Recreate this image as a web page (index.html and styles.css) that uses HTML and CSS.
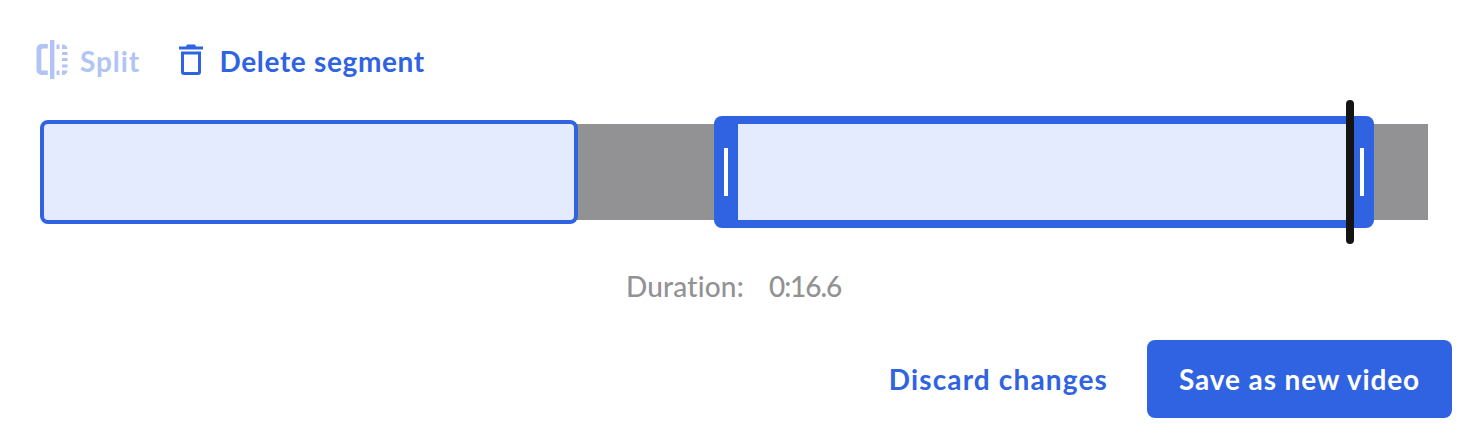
FILE: index.html
```html
<!DOCTYPE html>
<html lang="en">
<head>
    <meta charset="UTF-8">
    <meta name="viewport" content="width=device-width, initial-scale=1.0">
    <title>Video editor</title>
    <link rel="stylesheet" href="styles.css">
</head>
<body>
    <div class="editor">
        <div class="toolbar">
            <button class="tool split" disabled>
                <svg width="32" height="40" viewBox="0 0 32 40" fill="currentColor">
                    <path d="M11.800 4H5.500a5 5 0 0 0-5 5v21a5 5 0 0 0 5 5h6.300v-4.500H6.800a1.500 1.500 0 0 1-1.500-1.500V10a1.500 1.500 0 0 1 1.500-1.500h5z"/>
                    <rect x="14" y="0" width="4.400" height="39"/>
                    <path d="M20.500 4.500h3v4.500h-3zM20.500 30.500h3v4.500h-3zM26 4.500a5.500 5 0 0 1 5.500 4.500h-5.500zM26 12h5.500v3h-5.500zM26 18h5.500v3h-5.500zM26 24.500h5.500v3h-5.500zM26 30.500h5.500a5.500 5 0 0 1-5.500 4.500z"/>
                </svg>
                <span class="label-split">Split</span>
            </button>
            <button class="tool delete">
                <svg width="24" height="32" viewBox="0 0 24 32" fill="currentColor">
                    <path d="M0 2.500h7L8 .5h8l1 2h7v3H0z"/>
                    <path fill-rule="evenodd" d="M2 7.500h20V28a3 3 0 0 1-3 3H5a3 3 0 0 1-3-3zM5 10.500v17.500h14V10.500z"/>
                </svg>
                <span class="label-delete">Delete segment</span>
            </button>
        </div>

        <div class="timeline">
            <div class="segment"></div>
            <div class="segment selected">
                <span class="handle"></span>
                <span class="handle"></span>
            </div>
            <div class="playhead"></div>
        </div>

        <div class="duration">
            <span class="duration-label">Duration:</span>
            <span class="duration-value">0:16.6</span>
        </div>

        <div class="actions">
            <button class="discard">Discard changes</button>
            <button class="save">Save as new video</button>
        </div>
    </div>
</body>
</html>
```
FILE: styles.css
```css
body {
    margin: 0;
    background: #fff;
    font-family: Lato, sans-serif;
    font-size: 28px;
    line-height: 34px;
    font-variant-ligatures: none;
}
button {
    padding: 0;
    border: none;
    background: none;
    font: inherit;
    font-weight: 700;
    color: #2f63e2;
    white-space: nowrap;
    cursor: pointer;
}
.editor {
    box-sizing: border-box;
    width: 1480px;
    height: 438px;
    padding: 40px 28px 20px 36px;
}
.toolbar {
    display: flex;
    align-items: center;
    gap: 39px;
    height: 40px;
}
.tool {
    display: flex;
    align-items: center;
    gap: 12px;
}
.split {
    color: #b1c4f5;
    letter-spacing: 0.9px;
    cursor: default;
}
.delete {
    gap: 16.5px;
    letter-spacing: 0.65px;
}
.label-split,
.label-delete {
    padding-top: 1px;
}
/* Timeline */
.timeline {
    position: relative;
    display: flex;
    align-items: center;
    width: 1388px;
    height: 96px;
    margin: 44px 0 0 4px;
    background: linear-gradient(to right, transparent 8px, #929294 8px);
}
.segment {
    box-sizing: border-box;
    flex: none;
    width: 538px;
    height: 104px;
    border: 4px solid #2f63e2;
    border-radius: 8px;
    background: #e5ebff;
}
.selected {
    display: flex;
    align-items: center;
    justify-content: space-between;
    width: 660px;
    height: 112px;
    margin-left: 136px;
    padding: 0 10px;
    border-width: 8px 0;
    background: linear-gradient(to right, #2f63e2 24px, #e5ebff 24px, #e5ebff 636px, #2f63e2 636px);
}
.handle {
    width: 4px;
    height: 48px;
    background: #fff;
}
.playhead {
    position: absolute;
    top: -24px;
    left: 1306px;
    width: 8px;
    height: 144px;
    border-radius: 4px;
    background: #141414;
}
.duration {
    display: flex;
    gap: 23px;
    margin: 49px 0 0 590px;
    font-weight: 500;
    color: #929294;
}
.duration-label {
    width: 120px;
    letter-spacing: 0.2px;
}
.duration-value {
    letter-spacing: -1.1px;
}
.actions {
    display: flex;
    justify-content: flex-end;
    gap: 39px;
    margin-top: 37px;
}
.discard {
    letter-spacing: 1.15px;
}
.save {
    width: 305px;
    height: 78px;
    border-radius: 8px;
    background: #2f63e2;
    letter-spacing: 0.9px;
    color: #fff;
}
```
